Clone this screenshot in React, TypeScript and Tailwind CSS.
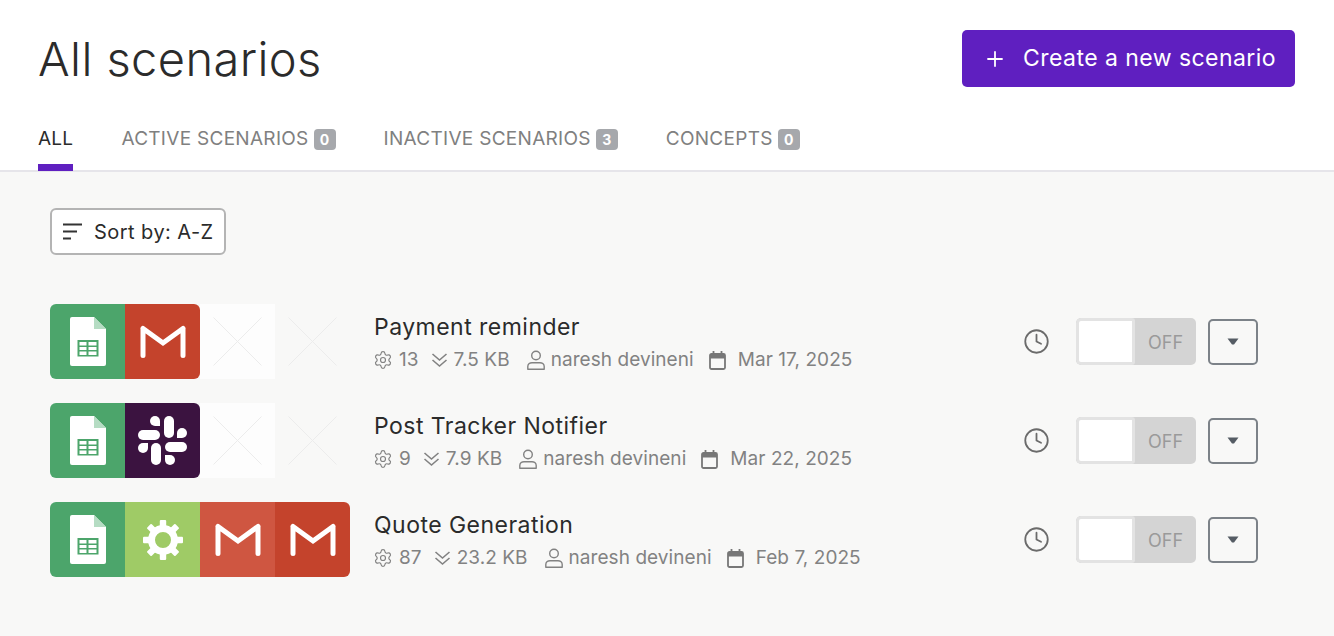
import React from "react";
import { Plus, Clock, Settings } from "lucide-react";

const Sheet = () => (
  <div className="w-[75px] h-[75px] bg-[#4ca56b] flex items-center justify-center">
    <svg width="36" height="49" viewBox="0 0 36 49">
      <path d="M2 0H24L36 12V47a2 2 0 0 1-2 2H2a2 2 0 0 1-2-2V2a2 2 0 0 1 2-2Z" fill="#fff" />
      <path d="M24 0L36 12H24Z" fill="#b5dcc3" />
      <path d="M7.5 23H28.5V39.5H7.5Z" fill="#4ca56b" />
      <path d="M9.500 25H16.500V28.500H9.500ZM18.500 25H26.500V28.500H18.500ZM9.500 30H16.500V33H9.500ZM18.500 30H26.500V33H18.500ZM9.500 34.500H16.500V38H9.500ZM18.500 34.500H26.500V38H18.500Z" fill="#fff" />
    </svg>
  </div>
);

const Gmail = ({ bg }: { bg: string }) => (
  <div className={`w-[75px] h-[75px] flex items-center justify-center ${bg}`}>
    <svg width="46" height="34" viewBox="0 0 46 34">
      <path d="M3 3.500V30.500M43 3.500V30.500M3 3.500L23 18L43 3.500" fill="none" stroke="#fff" strokeWidth="5" strokeLinecap="round" strokeLinejoin="miter" />
    </svg>
  </div>
);

const Slack = () => (
  <div className="w-[75px] h-[75px] bg-[#3b1340] flex items-center justify-center">
    <svg width="49" height="49" viewBox="0 0 49 49" fill="#fff">
      <rect x="0" y="14" width="22" height="10" rx="5" />
      <path d="M17 0a5 5 0 0 1 5 5v5h-5a5 5 0 0 1 0-10Z" />
      <rect x="26" y="0" width="10" height="22" rx="5" />
      <path d="M49 17a5 5 0 0 1-5 5h-5v-5a5 5 0 0 1 10 0Z" />
      <rect x="27" y="26" width="22" height="10" rx="5" />
      <path d="M32 49a5 5 0 0 1-5-5v-5h5a5 5 0 0 1 0 10Z" />
      <rect x="13" y="27" width="10" height="22" rx="5" />
      <path d="M0 32a5 5 0 0 1 5-5h5v5a5 5 0 0 1-10 0Z" />
    </svg>
  </div>
);

const Gear = () => (
  <div className="w-[75px] h-[75px] bg-[#9fcb66] flex items-center justify-center">
    <svg width="40" height="40" viewBox="0 0 40 40">
      <circle cx="20" cy="20" r="11.500" fill="none" stroke="#fff" strokeWidth="7" />
      {[0, 45, 90, 135, 180, 225, 270, 315].map((a) => (
        <rect key={a} x="16.800" y="0" width="6.400" height="8" rx="1" fill="#fff" transform={`rotate(${a} 20 20)`} />
      ))}
    </svg>
  </div>
);

const Blank = ({ bg }: { bg: string }) => (
  <div className={`w-[75px] h-[75px] flex items-center justify-center ${bg}`}>
    <svg width="49" height="49" viewBox="0 0 49 49">
      <path d="M0.500 0.500L48.500 48.500M48.500 0.500L0.500 48.500" stroke="#ececec" strokeWidth="1" fill="none" />
    </svg>
  </div>
);

const Chevrons = () => (
  <svg width="17" height="16" viewBox="0 0 17 16" className="shrink-0">
    <path d="M1.500 2L8.500 8L15.500 2M1.500 8L8.500 14L15.500 8" fill="none" stroke="#828282" strokeWidth="1.600" />
  </svg>
);

const Person = () => (
  <svg width="18" height="20" viewBox="0 0 18 20" className="shrink-0">
    <circle cx="9" cy="5.500" r="4.300" fill="none" stroke="#828282" strokeWidth="1.400" />
    <path d="M0.800 19.200V16.500C0.800 14 3 12.700 5 12.700H13C15 12.700 17.200 14 17.200 16.500V19.200Z" fill="none" stroke="#828282" strokeWidth="1.400" strokeLinejoin="round" />
  </svg>
);

const Cal = () => (
  <svg width="17" height="19" viewBox="0 0 17 19" className="shrink-0">
    <rect x="1" y="3" width="15" height="15" rx="1.500" fill="none" stroke="#777" strokeWidth="1.800" />
    <path d="M1 3.500H16V7.500H1Z" fill="#777" />
    <path d="M4.500 0V3M12.500 0V3" stroke="#777" strokeWidth="1.800" />
  </svg>
);

const Row = ({
  icons,
  name,
  ops,
  size,
  date,
}: {
  icons: React.ReactNode;
  name: string;
  ops: string;
  size: string;
  date: string;
}) => (
  <div className="h-[75px] flex items-center pl-[50px] pr-[76px]">
    <div className="flex w-[300px] h-[75px] shrink-0">{icons}</div>
    <div className="ml-[24px] mt-[1px] flex flex-col">
      <div className="text-[23px] leading-[32px] text-[#2b2b2b] tracking-[0.47px]">{name}</div>
      <div className="mt-[4px] flex items-center text-[19px] leading-[26px] text-[#828282] tracking-[0.06px]">
        <span className="flex items-center gap-[6px] mr-[12px]">
          <Settings size={20} strokeWidth={1.4} className="-ml-[1px]" />
          {ops}
        </span>
        <span className="flex items-center gap-[6px] mr-[17px]">
          <Chevrons />
          {size}
        </span>
        <span className="flex items-center gap-[6px] mr-[15px]">
          <Person />
          naresh devineni
        </span>
        <span className="flex items-center gap-[12px]">
          <Cal />
          {date}
        </span>
      </div>
    </div>
    <div className="ml-auto flex items-center">
      <Clock size={27} strokeWidth={1.6} className="text-[#6b6b6b] -mt-[1px]" />
      <div className="ml-[26px] w-[120px] h-[47px] rounded-[5px] bg-[#d4d4d4] flex items-center overflow-hidden">
        <div className="w-[59px] h-[47px] border-[3px] border-[#e3e3e3] rounded-l-[5px] rounded-r-[3px] bg-white" />
        <span className="ml-[13px] mt-[2px] text-[18px] text-[#9a9a9a]">OFF</span>
      </div>
      <button className="ml-[12px] w-[50px] h-[46px] rounded-[5px] border-2 border-[#7c8288] flex items-center justify-center">
        <svg width="12" height="7" viewBox="0 0 12 7">
          <path d="M0.500 0.500H11.500L7 6.500H5Z" fill="#555c64" />
        </svg>
      </button>
    </div>
  </div>
);

const Tab = ({ label, count }: { label: string; count: string }) => (
  <div className="flex items-center h-[48px] pb-[14px] text-[19px] tracking-[0.29px] text-[#808080]">
    {label}
    <span className="ml-[5px] w-[22px] h-[21px] rounded-[4px] bg-[#a6a8ac] text-white text-[14px] font-bold tracking-normal flex items-center justify-center">
      {count}
    </span>
  </div>
);

export default function App() {
  return (
    <div className="w-[1334px] h-[636px] bg-[#f8f8f7] overflow-hidden font-['Inter',sans-serif]">
      <div className="h-[172px] bg-white border-b-2 border-b-[#e6e5ea] flex flex-col">
        <div className="flex items-start justify-between pl-[38px] pr-[39px] pt-[30px] h-[124px]">
          <h1 className="text-[47px] leading-[58px] text-[#2b2b2b] font-light tracking-[0.4px]">All scenarios</h1>
          <button className="w-[333px] h-[57px] rounded-[5px] bg-[#5f1fc0] text-white text-[23px] tracking-[0.45px] flex items-center pl-[21px] gap-[16px]">
            <Plus size={24} strokeWidth={1.8} />
            Create a new scenario
          </button>
        </div>
        <div className="flex pl-[38px] gap-[48px]">
          <div className="relative flex items-center h-[48px] pb-[14px] text-[19px] tracking-[0.26px] text-[#2b2b2b]">
            ALL
            <div className="absolute left-0 right-0 -bottom-[1px] h-[7px] bg-[#5f1fc0]" />
          </div>
          <Tab label="ACTIVE SCENARIOS" count="0" />
          <Tab label="INACTIVE SCENARIOS" count="3" />
          <Tab label="CONCEPTS" count="0" />
        </div>
      </div>
      <div className="pl-[50px] pt-[36px]">
        <button className="w-[176px] h-[47px] rounded-[6px] border-2 border-[#b4b4b4] bg-white flex items-center pl-[11px] gap-[12px] text-[20px] tracking-[0.45px] text-[#2b2b2b]">
          <svg width="19" height="17" viewBox="0 0 19 17" className="shrink-0">
            <path d="M0 1.500H19M0 8.500H14M0 15.500H8" stroke="#333" strokeWidth="1.800" fill="none" />
          </svg>
          <span className="mt-[1px]">Sort by: A-Z</span>
        </button>
      </div>
      <div className="mt-[49px] flex flex-col gap-[24px]">
        <Row
          icons={<><div className="flex rounded-[6px] overflow-hidden"><Sheet /><Gmail bg="bg-[#c4432c]" /></div><Blank bg="bg-[#fdfdfd]" /><Blank bg="bg-transparent" /></>}
          name="Payment reminder"
          ops="13"
          size="7.5 KB"
          date="Mar 17, 2025"
        />
        <Row
          icons={<><div className="flex rounded-[6px] overflow-hidden"><Sheet /><Slack /></div><Blank bg="bg-[#fdfdfd]" /><Blank bg="bg-transparent" /></>}
          name="Post Tracker Notifier"
          ops="9"
          size="7.9 KB"
          date="Mar 22, 2025"
        />
        <Row
          icons={<div className="flex rounded-[6px] overflow-hidden"><Sheet /><Gear /><Gmail bg="bg-[#cf5641]" /><Gmail bg="bg-[#c4432c]" /></div>}
          name="Quote Generation"
          ops="87"
          size="23.2 KB"
          date="Feb 7, 2025"
        />
      </div>
    </div>
  );
}
